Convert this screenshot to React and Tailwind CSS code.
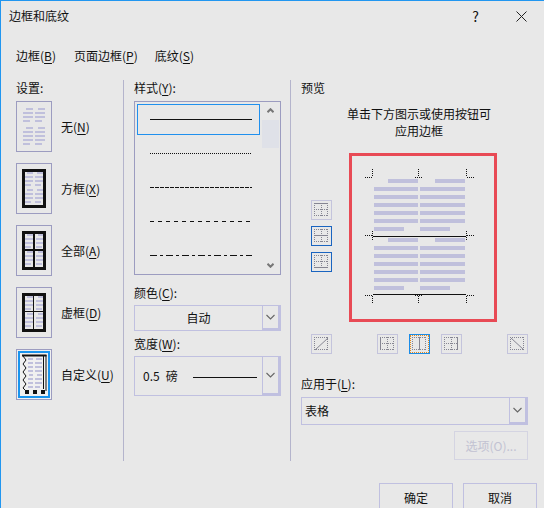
const barColor = '#c0c0dc';

function U({ children }) {
  return <u className="underline underline-offset-2">{children}</u>;
}

function Bars({ x1 = 9, x2 = 20, rows }) {
  return (
    <>
      {rows.map(([y, sl, sr, offL = 0, offR = 0], i) => (
        <g key={i} fill={barColor}>
          <rect x={x1 + offL} y={y} width={sl} height="2" />
          <rect x={x2 + offR} y={y} width={sr} height="2" />
        </g>
      ))}
    </>
  );
}

const noneRows = [
  [7, 7, 7, 3, 3], [11, 10, 10], [15, 10, 10], [19, 7, 7],
  [26, 7, 7, 3, 3], [30, 10, 10], [34, 10, 10], [38, 10, 10], [42, 7, 7],
];

const frameRows = [
  [9, 6, 6, 2, 2], [13, 8, 8], [17, 8, 8], [21, 6, 6],
  [26, 6, 6, 2, 2], [30, 8, 8], [34, 8, 8], [38, 6, 6],
];

function SettingThumb({ kind }) {
  return (
    <svg width="34" height="49" viewBox="1 1 34 49" className="block">
      {kind === 'none' && <Bars x1={7} x2={19} rows={noneRows} />}
      {kind === 'box' && (
        <>
          <Bars x1={9} x2={19} rows={frameRows} />
          <rect x="7.5" y="7.5" width="21" height="36" fill="none" stroke="#111" strokeWidth="3" />
        </>
      )}
      {kind === 'all' && (
        <>
          <Bars x1={9} x2={20} rows={frameRows} />
          <rect x="7.5" y="7.5" width="21" height="36" fill="none" stroke="#111" strokeWidth="3" />
          <path d="M18 8V43M8 25H28" stroke="#111" strokeWidth="2" />
        </>
      )}
      {kind === 'dash' && (
        <>
          <Bars x1={9} x2={20} rows={frameRows} />
          <rect x="7.5" y="7.5" width="21" height="36" fill="none" stroke="#111" strokeWidth="3" />
          <path d="M17.5 8V43M8 24.5H28" stroke="#111" strokeWidth="1" />
        </>
      )}
      {kind === 'custom' && (
        <>
          <rect x="3" y="3" width="30" height="45" fill="#f0f0f0" stroke="#1a94ee" strokeWidth="2" />
          <Bars x1={12} x2={19} rows={[
            [9, 5, 6, 0, 1], [13, 5, 7], [17, 5, 7], [21, 5, 7], [25, 4, 5, 1, 2],
            [29, 5, 7], [33, 5, 7], [37, 5, 5],
          ]} />
          <path d="M6 6.5H30.5" stroke="#111" strokeWidth="2" />
          <path d="M27.5 6V40M30 6V42" stroke="#111" strokeWidth="1" />
          <path d="M7 7L10 11L7 15L10 19L7 23L10 27L7 31L10 35L7 39L9 41" fill="none" stroke="#111" strokeWidth="1" />
          <path d="M9 41h4v4h-4zM17 41h4v4h-4zM25 41h4v4h-4z" fill="#111" />
        </>
      )}
    </svg>
  );
}

function Setting({ kind, label, k, selected }) {
  return (
    <div className="flex items-center h-[51px]">
      <div className={`w-9 h-[51px] border border-[#9c9cc0] ${selected ? 'bg-[#f0f0f0]' : ''}`}>
        <SettingThumb kind={kind} />
      </div>
      <span className="ml-[9px] whitespace-nowrap">{label}(<U>{k}</U>)</span>
    </div>
  );
}

function StyleLine({ dash, selected }) {
  return (
    <div className={`h-[31px] flex items-center pl-[12px] mb-[3px] border ${selected ? 'border-[#2090ee]' : 'border-transparent'}`}>
      <svg width="102" height="1" className="block">
        <line x1="0" y1="0.5" x2="102" y2="0.5" stroke="#111" strokeWidth="1" strokeDasharray={dash} />
      </svg>
    </div>
  );
}

function Chevron({ color = '#666', bold }) {
  return bold ? (
    <svg width="7" height="5" viewBox="0 0 7 5">
      <path d="M0.5 0.8L3.5 3.8L6.5 0.8" fill="none" stroke={color} strokeWidth="2" />
    </svg>
  ) : (
    <svg width="9" height="6" viewBox="0 0 9 6">
      <path d="M0.5 1L4.5 5L8.5 1" fill="none" stroke={color} strokeWidth="1.1" />
    </svg>
  );
}

function DropButton() {
  return (
    <div className="w-[18px] h-full flex items-center justify-center border-l border-[#c0c0e0] border-r-2 border-b-2">
      <Chevron />
    </div>
  );
}

const grey = '#858592';

function GridIcon({ solid = [], dotted = [] }) {
  return (
    <svg width="19" height="18" viewBox="0 0 19 18" className="block">
      {dotted.map((d, i) => (
        <path key={i} d={d} fill="none" stroke={grey} strokeWidth="1" strokeDasharray="1 1" />
      ))}
      {solid.map((d, i) => (
        <path key={i} d={d} fill="none" stroke={grey} strokeWidth="1" />
      ))}
    </svg>
  );
}

const T = 'M2 2.5H16';
const M = 'M2 8.5H16';
const B = 'M2 14.5H16';
const L = 'M2.5 2V15';
const C = 'M9.5 2V15';
const R = 'M15.5 2V15';

function IconButton({ active, focused, solid, dotted }) {
  const border = focused ? 'border-[#1a8ce8]' : active ? 'border-[#1a64c0]' : 'border-[#c4c4dc]';
  return (
    <div className={`w-[21px] h-5 border ${border} ${focused ? 'outline-dotted outline-1 -outline-offset-2 outline-[#e08a20]' : ''}`}>
      <GridIcon solid={solid} dotted={dotted} />
    </div>
  );
}

function Dotted({ x1, y1, x2, y2 }) {
  return <line x1={x1} y1={y1} x2={x2} y2={y2} stroke="#111" strokeWidth="1" strokeDasharray="1 1" />;
}

function Preview() {
  const full = [187, 195, 203, 211, 219, 246, 254, 262, 270, 278];
  const head = [179, 238];
  const tail = [227, 286];
  return (
    <svg width="142" height="163" viewBox="352 156 142 163" className="block">
      <g fill={barColor}>
        {full.map((y) => (
          <g key={y}>
            <rect x="374" y={y} width="44" height="4" />
            <rect x="420" y={y} width="45" height="4" />
          </g>
        ))}
        {head.map((y) => (
          <g key={y}>
            <rect x="388" y={y} width="30" height="4" />
            <rect x="435" y={y} width="30" height="4" />
          </g>
        ))}
        {tail.map((y) => (
          <g key={y}>
            <rect x="374" y={y} width="30" height="4" />
            <rect x="420" y={y} width="30" height="4" />
          </g>
        ))}
      </g>
      <line x1="373" y1="236.5" x2="466" y2="236.5" stroke="#111" strokeWidth="1" />
      <line x1="373" y1="294.5" x2="466" y2="294.5" stroke="#111" strokeWidth="1" />
      {[372.5, 418.5, 466.5].map((x) => (
        <g key={x}>
          <Dotted x1={x} y1="169" x2={x} y2="177" />
          <Dotted x1={x} y1="296" x2={x} y2="304" />
        </g>
      ))}
      {[[365, 372], [415, 422], [467, 474]].map(([a, b]) => (
        <g key={a}>
          <Dotted x1={a} y1="177.5" x2={b} y2="177.5" />
          <Dotted x1={a} y1="295.5" x2={b} y2="295.5" />
        </g>
      ))}
      <Dotted x1="365" y1="235.5" x2="372" y2="235.5" />
      <Dotted x1="467" y1="235.5" x2="474" y2="235.5" />
      <Dotted x1="372.5" y1="231" x2="372.5" y2="240" />
      <Dotted x1="466.5" y1="231" x2="466.5" y2="240" />
    </svg>
  );
}

export default function App() {
  return (
    <div className="w-[544px] h-[508px] overflow-hidden flex flex-col bg-[#e8e8e8] border-t border-l border-[#2196f0] text-[12px] leading-4 text-[#111] font-['Noto_Sans_CJK_SC','Noto_Sans',sans-serif]">
      <div className="h-[30px] flex items-center pl-2 shrink-0">
        <span>边框和底纹</span>
        <span className="ml-auto mr-[37px] text-[14px]">?</span>
        <svg width="11" height="11" viewBox="0 0 11 11" className="mr-[17px]">
          <path d="M0.5 0.5L10.5 10.5M10.5 0.5L0.5 10.5" stroke="#222" strokeWidth="1" />
        </svg>
      </div>

      <div className="mt-[15px] h-5 flex items-center gap-[18px] pl-[15px] shrink-0">
        <span>边框(<U>B</U>)</span>
        <span>页面边框(<U>P</U>)</span>
        <span className="-ml-px">底纹(<U>S</U>)</span>
      </div>

      <div className="mt-[14px] h-[381px] flex pl-[15px] shrink-0">
        <div className="w-[107px]">
          <div className="h-4 mb-[5px]">设置:</div>
          <div className="flex flex-col gap-[11px]">
            <Setting kind="none" label="无" k="N" />
            <Setting kind="box" label="方框" k="X" />
            <Setting kind="all" label="全部" k="A" />
            <Setting kind="dash" label="虚框" k="D" />
            <Setting kind="custom" label="自定义" k="U" selected />
          </div>
        </div>

        <div className="w-[167px] border-l border-[#b4b4cc] pl-[10px]">
          <div className="h-4 mb-[5px]">样式(<U>Y</U>):</div>
          <div className="w-[147px] h-[174px] border border-[#9c9cc0] flex overflow-hidden">
            <div className="w-[125px] pl-[2px] pt-[2px] shrink-0">
              <StyleLine selected />
              <StyleLine dash="1 1" />
              <StyleLine dash="4 1" />
              <StyleLine dash="4 4" />
              <StyleLine dash="7 3 3 3" />
            </div>
            <div className="w-[17px] ml-[2px] flex flex-col items-center">
              <div className="h-[18px] flex items-center justify-center rotate-180">
                <Chevron color="#777" bold />
              </div>
              <div className="w-full h-7 bg-[#dfe1e8]" />
              <div className="mt-auto mb-[6px]">
                <Chevron color="#777" bold />
              </div>
            </div>
          </div>

          <div className="h-4 mt-[10px] mb-[4px]">颜色(<U>C</U>):</div>
          <div className="w-[147px] h-[26px] border border-[#c0c0e0] flex items-center">
            <span className="flex-1 text-center">自动</span>
            <DropButton />
          </div>

          <div className="h-4 mt-[5px] mb-[4px]">宽度(<U>W</U>):</div>
          <div className="w-[147px] h-10 border border-[#c0c0e0] flex items-center">
            <span className="ml-[8px] whitespace-nowrap">0.5</span>
            <span className="ml-[6px]">磅</span>
            <div className="ml-[15px] mt-[2px] w-16 h-px bg-[#111]" />
            <div className="ml-auto h-full">
              <DropButton />
            </div>
          </div>
        </div>

        <div className="border-l border-[#b4b4cc] pl-[10px] w-[236px]">
          <div className="h-4">预览</div>
          <div className="mt-[9px] w-[236px] text-center leading-[17px]">
            单击下方图示或使用按钮可
            <br />
            应用边框
          </div>

          <div className="mt-[14px] flex">
            <div className="w-[48px] pl-[10px] pt-[47px] flex flex-col gap-[6px]">
              <IconButton solid={[T]} dotted={[M, B, L, C, R]} />
              <IconButton active solid={[M]} dotted={[T, B, L, C, R]} />
              <IconButton active solid={[B]} dotted={[T, M, L, C, R]} />
            </div>
            <div className="w-[148px] h-[169px] border-[3px] border-[#e84a55]">
              <Preview />
            </div>
          </div>

          <div className="mt-[12px] pl-[10px] flex">
            <IconButton solid={['M3 15L16 3']} dotted={[T, B, L, R]} />
            <div className="ml-[45px]">
              <IconButton solid={[L]} dotted={[T, M, B, C, R]} />
            </div>
            <div className="ml-[11px]">
              <IconButton focused solid={[C]} dotted={[T, B, L, R]} />
            </div>
            <div className="ml-[11px]">
              <IconButton solid={[R]} dotted={[T, M, B, L, C]} />
            </div>
            <div className="ml-[45px]">
              <IconButton solid={['M3 3L16 15']} dotted={[T, B, L, R]} />
            </div>
          </div>

          <div className="w-[227px] flex flex-col">
            <div className="h-4 mt-[22px] mb-[5px]">应用于(<U>L</U>):</div>
            <div className="h-[28px] border border-[#c0c0e0] flex items-center pl-[3px]">
              <span>表格</span>
              <div className="ml-auto h-full">
                <DropButton />
              </div>
            </div>
            <div className="mt-[6px] self-end w-[74px] h-[29px] border border-[#d4d4e2] flex items-center justify-center text-[#c2c2d2]">
              选项(O)...
            </div>
          </div>
        </div>
      </div>

      <div className="mt-[22px] flex justify-end gap-[10px] pr-[7px] shrink-0">
        <div className="w-[74px] h-[30px] border border-[#c0c0e0] flex items-center justify-center">确定</div>
        <div className="w-[74px] h-[30px] border border-[#c0c0e0] flex items-center justify-center">取消</div>
      </div>
    </div>
  );
}
